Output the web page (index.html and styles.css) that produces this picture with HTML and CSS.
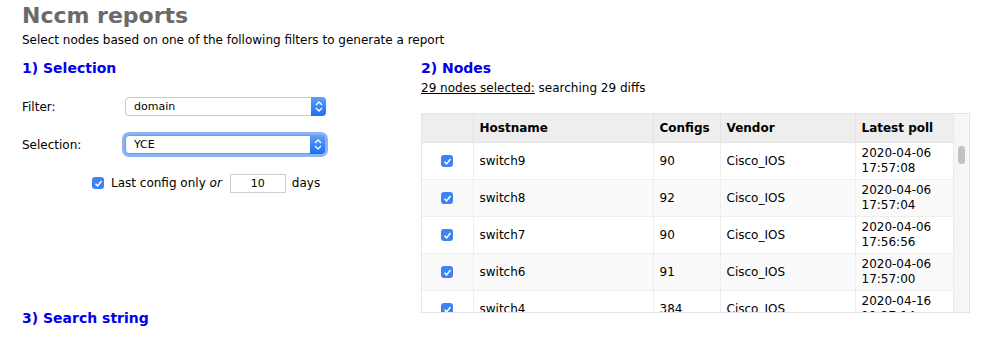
FILE: index.html
```html
<!DOCTYPE html>
<html>
<head>
<meta charset="utf-8">
<link rel="stylesheet" href="styles.css">
</head>
<body>
<div class="page">
  <h1 class="title">Nccm reports</h1>
  <p class="intro">Select nodes based on one of the following filters to generate a report</p>
  <div class="layout">
    <section class="selection">
      <h2 class="section-head">1) Selection</h2>
      <div class="form-row first">
        <label class="form-label">Filter:</label>
        <div class="select">
          <span class="select-value">domain</span>
          <span class="select-btn"><svg width="8" height="11" viewBox="0 0 8 11"><path d="M1 4 L4 1 L7 4 M1 7 L4 10 L7 7" fill="none" stroke="#fff" stroke-width="1.3"/></svg></span>
        </div>
      </div>
      <div class="form-row">
        <label class="form-label">Selection:</label>
        <div class="select focused">
          <span class="select-value">YCE</span>
          <span class="select-btn"><svg width="8" height="11" viewBox="0 0 8 11"><path d="M1 4 L4 1 L7 4 M1 7 L4 10 L7 7" fill="none" stroke="#fff" stroke-width="1.3"/></svg></span>
        </div>
      </div>
      <div class="option-row">
        <span class="check"><svg width="9" height="9" viewBox="0 0 9 9"><path d="M1.5 4.8 L3.6 6.9 L7.5 2" fill="none" stroke="#fff" stroke-width="1.6"/></svg></span>
        <span class="option-text">Last config only <em>or</em></span>
        <span class="num-input">10</span>
        <span class="option-text">days</span>
      </div>
    </section>
    <section class="nodes">
      <h2 class="section-head">2) Nodes</h2>
      <p class="summary"><u>29 nodes selected:</u> searching 29 diffs</p>
      <div class="grid-box">
        <div class="grid-main">
          <table class="grid">
            <colgroup><col class="c-check"><col class="c-host"><col class="c-conf"><col class="c-vendor"><col class="c-poll"></colgroup>
            <thead>
              <tr><th></th><th>Hostname</th><th>Configs</th><th>Vendor</th><th>Latest poll</th></tr>
            </thead>
            <tbody>
              <tr><td class="cb"><span class="check"><svg width="9" height="9" viewBox="0 0 9 9"><path d="M1.5 4.8 L3.6 6.9 L7.5 2" fill="none" stroke="#fff" stroke-width="1.6"/></svg></span></td><td>switch9</td><td>90</td><td>Cisco_IOS</td><td>2020-04-06<br>17:57:08</td></tr>
              <tr><td class="cb"><span class="check"><svg width="9" height="9" viewBox="0 0 9 9"><path d="M1.5 4.8 L3.6 6.9 L7.5 2" fill="none" stroke="#fff" stroke-width="1.6"/></svg></span></td><td>switch8</td><td>92</td><td>Cisco_IOS</td><td>2020-04-06<br>17:57:04</td></tr>
              <tr><td class="cb"><span class="check"><svg width="9" height="9" viewBox="0 0 9 9"><path d="M1.5 4.8 L3.6 6.9 L7.5 2" fill="none" stroke="#fff" stroke-width="1.6"/></svg></span></td><td>switch7</td><td>90</td><td>Cisco_IOS</td><td>2020-04-06<br>17:56:56</td></tr>
              <tr><td class="cb"><span class="check"><svg width="9" height="9" viewBox="0 0 9 9"><path d="M1.5 4.8 L3.6 6.9 L7.5 2" fill="none" stroke="#fff" stroke-width="1.6"/></svg></span></td><td>switch6</td><td>91</td><td>Cisco_IOS</td><td>2020-04-06<br>17:57:00</td></tr>
              <tr><td class="cb"><span class="check"><svg width="9" height="9" viewBox="0 0 9 9"><path d="M1.5 4.8 L3.6 6.9 L7.5 2" fill="none" stroke="#fff" stroke-width="1.6"/></svg></span></td><td>switch4</td><td>384</td><td>Cisco_IOS</td><td>2020-04-16<br>11:27:14</td></tr>
            </tbody>
          </table>
        </div>
        <div class="scroll-track"><div class="scroll-thumb"></div></div>
      </div>
    </section>
    <section class="search">
      <h2 class="section-head">3) Search string</h2>
    </section>
  </div>
</div>
</body>
</html>
```
FILE: styles.css
```css
html, body {
  margin: 0;
  padding: 0;
  background: #fff;
}
body {
  font-family: "DejaVu Sans", Verdana, sans-serif;
  font-size: 12px;
  color: #000;
  overflow: hidden;
}
.page {
  padding: 0 0 0 22px;
}
.title {
  margin: 0;
  padding-top: 3px;
  font-size: 22px;
  line-height: 26px;
  font-weight: bold;
  color: #6a6a6a;
}
.intro {
  margin: 2px 0 0 0;
  line-height: 18px;
}
.layout {
  display: grid;
  grid-template-columns: 399px 550px;
  row-gap: 0;
}
.section-head {
  margin: 0;
  font-size: 14px;
  line-height: 20px;
  font-weight: bold;
  color: #0000ee;
}
.selection {
  padding-top: 9px;
}
.nodes {
  padding-top: 9px;
}
.search {
  margin-top: -5px;
}
.form-row {
  display: flex;
  align-items: center;
  margin-top: 17px;
  height: 21px;
}
.form-row.first {
  margin-top: 18px;
}
.form-label {
  width: 103px;
}
.select {
  box-sizing: border-box;
  display: flex;
  align-items: center;
  width: 201px;
  height: 19px;
  border: 1px solid #c9c9c9;
  border-radius: 4px;
  background: #fff;
  font-size: 11px;
}
.select.focused {
  box-shadow: 0 0 0 3px #8db3f3;
  border-color: #6c9ae8;
  width: 200px;
}
.select-value {
  flex: 1;
  padding-left: 8px;
}
.select-btn {
  box-sizing: border-box;
  width: 15px;
  height: 19px;
  margin: -1px -1px -1px 0;
  border-radius: 0 4px 4px 0;
  background: linear-gradient(#5ea0ff, #1a6ff0);
  display: flex;
  align-items: center;
  justify-content: center;
}
.option-row {
  display: flex;
  align-items: center;
  margin-top: 19px;
  padding-left: 70px;
  height: 18px;
}
.check {
  display: inline-flex;
  align-items: center;
  justify-content: center;
  width: 12px;
  height: 12px;
  border-radius: 3px;
  background: #3b83f7;
}
.option-row .check {
  margin-right: 7px;
}
.option-text em {
  font-style: italic;
}
.num-input {
  box-sizing: border-box;
  width: 56px;
  height: 19px;
  border: 1px solid #cfcfcf;
  text-align: center;
  font-size: 11px;
  line-height: 17px;
  margin: 0 6px 0 8px;
}
.summary {
  margin: 2px 0 0 0;
  line-height: 16px;
}
.summary u {
  text-decoration: underline;
}
.grid-box {
  display: flex;
  margin-top: 17px;
  width: 549px;
  height: 200px;
  box-sizing: border-box;
  border: 1px solid #e4e4e4;
  overflow: hidden;
}
.grid-main {
  width: 533px;
  overflow: hidden;
}
.grid {
  border-collapse: collapse;
  table-layout: fixed;
  width: 533px;
}
.c-check { width: 51px; }
.c-host { width: 180px; }
.c-conf { width: 67px; }
.c-vendor { width: 135px; }
.c-poll { width: 100px; }
.grid th {
  background: #eeeeee;
  height: 28px;
  padding: 0 0 0 6px;
  text-align: left;
  font-weight: bold;
  border-right: 1px solid #e2e2e2;
  border-bottom: 1px solid #e2e2e2;
}
.grid td {
  height: 36px;
  padding: 0 0 0 6px;
  line-height: 15px;
  border-right: 1px solid #eeeeee;
  border-bottom: 1px solid #eeeeee;
  vertical-align: middle;
}
.grid td.cb {
  padding: 0;
  text-align: center;
}
.grid td.cb .check {
  vertical-align: middle;
}
.grid tbody tr:nth-child(even) td {
  background: #fafafa;
}
.scroll-track {
  width: 15px;
  background: #f6f6f6;
  border-left: 1px solid #ebebeb;
  position: relative;
}
.scroll-thumb {
  position: absolute;
  left: 4px;
  top: 32px;
  width: 7px;
  height: 18px;
  border-radius: 4px;
  background: #c2c2c2;
}
```
